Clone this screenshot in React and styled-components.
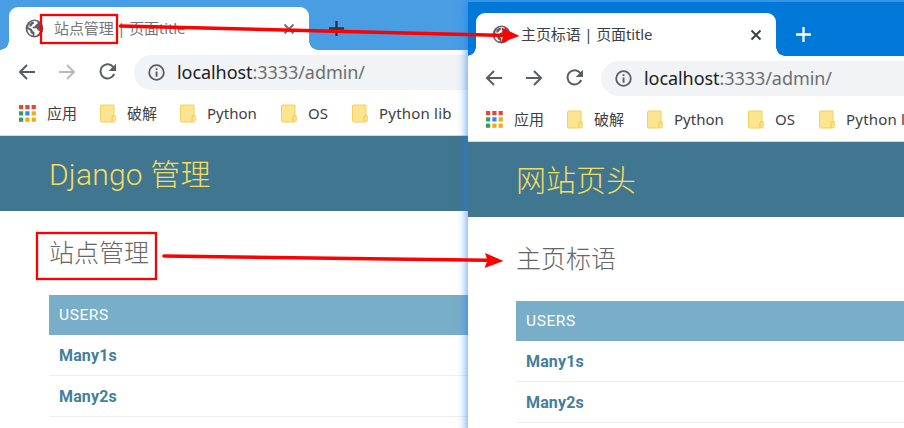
import React from "react";
import styled, { createGlobalStyle } from "styled-components";

const Global = createGlobalStyle`
  * { box-sizing: border-box; }
  body { margin: 0; overflow: hidden; background: #fff; }
`;

const uiFont = `"Noto Sans", "Noto Sans CJK SC", sans-serif`;

const Desktop = styled.div`
  position: relative;
  width: 904px;
  height: 428px;
  overflow: hidden;
  background: #499de3;
`;

const Window = styled.section`
  position: absolute;
  left: ${(p) => p.$x}px;
  top: ${(p) => p.$y}px;
  width: ${(p) => p.$w}px;
  height: 434px;
  padding-left: ${(p) => p.$lead}px;
  overflow: ${(p) => (p.$active ? "visible" : "hidden")};
  background: linear-gradient(
    ${(p) => (p.$active ? "#0078d7" : "#499de3")} 54px,
    #fff 54px 139px,
    #d3dade 139px 140px,
    #417690 140px 215px,
    #fff 215px
  );
  box-shadow: ${(p) => (p.$active ? "0 0 9px 1px rgba(30, 125, 245, 0.75)" : "none")};
`;

const TabStrip = styled.div`
  display: flex;
  align-items: flex-end;
  height: 54px;
  padding-left: 8px;
`;

const Tab = styled.div`
  position: relative;
  display: flex;
  align-items: center;
  width: 300px;
  height: 43px;
  padding: 0 14px 0 16px;
  border-radius: 9px 9px 0 0;
  background: #fff;
  color: ${(p) => (p.$active ? "#3c4043" : "#747679")};
  &::before, &::after {
    content: "";
    position: absolute;
    bottom: 0;
    width: 9px;
    height: 9px;
  }
  &::before {
    left: -9px;
    background: radial-gradient(circle at 0 0, transparent 8.5px, #fff 9px);
  }
  &::after {
    right: -9px;
    background: radial-gradient(circle at 100% 0, transparent 8.5px, #fff 9px);
  }
`;

const TabTitle = styled.span`
  flex: 1;
  margin: 0 0 1px 10px;
  font: 15px/20px ${uiFont};
  letter-spacing: -0.12px;
  white-space: nowrap;
`;

const NewTab = styled.div`
  display: flex;
  margin: 0 0 14px 20px;
  color: ${(p) => (p.$active ? "#fff" : "#27323c")};
`;

const Toolbar = styled.div`
  display: flex;
  align-items: center;
  height: 45px;
  padding-left: 16.5px;
  color: #5a5e63;
`;

const NavIcon = styled.span`
  display: flex;
  width: 40px;
  margin-bottom: 1px;
  opacity: ${(p) => (p.$dim ? 0.42 : 1)};
`;

const AddressBar = styled.div`
  display: flex;
  align-items: center;
  flex: 1;
  height: 35px;
  margin-left: -3.5px;
  padding-left: 14px;
  border-radius: 18px 0 0 18px;
  background: #f1f3f4;
`;

const Url = styled.span`
  margin: 0 0 2px 12px;
  font: 18px/24px ${uiFont};
  letter-spacing: -0.06px;
  color: #6b6e72;
  b { font-weight: 400; color: #202124; }
`;

const Bookmarks = styled.div`
  display: flex;
  align-items: center;
  height: 41px;
  padding: 0 0 5px 18px;
`;

const Bookmark = styled.span`
  display: flex;
  align-items: center;
  flex: none;
  margin-right: 23px;
  gap: 11px;
`;

const BookmarkLabel = styled.span`
  width: ${(p) => p.$w}px;
  font: 15px/20px ${uiFont};
  letter-spacing: ${(p) => p.$spacing || 0}px;
  color: #3c4043;
  white-space: nowrap;
`;

const SiteHeader = styled.header`
  display: flex;
  align-items: center;
  height: 75px;
  padding: 3px 0 0 48px;
  color: #f5dd5d;
  font: 300 30px/40px Roboto, "Noto Sans CJK SC", sans-serif;
  letter-spacing: ${(p) => p.$spacing || 0}px;
`;

const Content = styled.main`
  padding: 24px 0 0 48px;
`;

const PageTitle = styled.h1`
  height: 38px;
  margin: 0 0 22px;
  color: #666;
  font: 300 25px/38px Roboto, "Noto Sans CJK SC", sans-serif;
`;

const ModuleCaption = styled.div`
  height: 40px;
  padding-left: 10px;
  background: #79aec8;
  color: #fff;
  font: 400 15.5px/41px Roboto, sans-serif;
  letter-spacing: 0.6px;
`;

const ModelRow = styled.div`
  height: 41px;
  padding-left: 10px;
  border-bottom: 1px solid #eee;
  color: #447e9b;
  font: 700 16px/41px Roboto, sans-serif;
  letter-spacing: 0.15px;
`;

const Annotations = styled.svg`
  position: absolute;
  inset: 0;
`;

const Globe = () => (
  <svg width="19" height="19" viewBox="0 0 19 19">
    <circle cx="9.5" cy="9.5" r="8.9" fill="#5b5f64" />
    <path d="M9.600 1.800 12.500 2.800 12.500 4.700 10.600 5.700 10.100 7.200 7.700 7.900 7.900 9.200 11.600 9.200 13 11.400 14.800 12 13.800 14.600 11.300 16.600 9.300 17 9.600 13.700 7.600 11.800 6.700 10 3.200 8.300A7 7 0 0 1 9.600 1.800" fill="#fff" />
    <path d="M2.400 9.700 5.200 11.800 5.800 14.200 7.800 15.300 7.600 16.600A7.300 7.300 0 0 1 2.400 9.700" fill="#fff" />
    <path d="M4.300 5.200 6.400 3.300 9 2.800 8.900 4.600 7.200 5.700 6.500 7.300 4.500 7.800z" fill="#5b5f64" />
  </svg>
);

const Close = () => (
  <svg width="12" height="12" viewBox="0 0 12 12" fill="none" stroke="currentColor" strokeWidth="2">
    <path d="M1.500 1.500l9 9m0-9-9 9" />
  </svg>
);

const Plus = () => (
  <svg width="15" height="15" viewBox="0 0 15 15" fill="none" stroke="currentColor" strokeWidth="2.3">
    <path d="M7.500 0v15M0 7.500h15" />
  </svg>
);

const Arrow = ({ forward }) => (
  <svg width="18" height="18" viewBox="0 0 18 18" fill="none" stroke="currentColor" strokeWidth="2">
    <path d={forward ? "M1 9h15M9 2l7 7-7 7" : "M17 9H2M9 2L2 9l7 7"} />
  </svg>
);

const Reload = () => (
  <svg width="20" height="18" viewBox="0 0 20 18">
    <path d="M15.400 4.200A7.100 7.100 0 1 0 16.200 11" fill="none" stroke="currentColor" strokeWidth="2" />
    <path d="M18 .7V8h-7.300z" fill="currentColor" />
  </svg>
);

const Info = () => (
  <svg width="17" height="17" viewBox="0 0 17 17">
    <circle cx="8.500" cy="8.500" r="7.300" fill="none" stroke="#5a5e63" strokeWidth="1.8" />
    <path d="M7.600 4.200h1.900v1.900H7.600zM7.600 7.400h1.900v5.400H7.600z" fill="#5a5e63" />
  </svg>
);

const gridColors = ["#ea4335", "#ea4335", "#ea4335", "#34a05a", "#2e8bef", "#f9a80b", "#34a05a", "#f9a80b", "#f9a80b"];

const Apps = () => (
  <svg width="17" height="17" viewBox="0 0 17 17">
    {gridColors.map((c, i) => (
      <rect key={i} x={(i % 3) * 6.3} y={Math.floor(i / 3) * 6.3} width="4.2" height="4.2" fill={c} />
    ))}
  </svg>
);

const Folder = () => (
  <svg width="16" height="19" viewBox="0 0 16 19">
    <path d="M1 1h13v10.800h1.300V17l-1 1H1.500L.5 17.200V1.500z" fill="#ffe48f" stroke="#f5d05c" />
    <path d="M14 11.800h-1.400l-.6 1.600v4.400" fill="none" stroke="#edc74f" />
  </svg>
);

const bookmarks = [
  { name: "破解", width: 30 },
  { name: "Python", width: 51 },
  { name: "OS", width: 21 },
  { name: "Python lib", width: 74, spacing: 0.2 },
];

const Browser = ({ x, y, w, lead, active, tab, header, headerSpacing, title }) => (
  <Window $x={x} $y={y} $w={w} $lead={lead} $active={active}>
    <TabStrip>
      <Tab $active={active}>
        <Globe />
        <TabTitle>{tab}</TabTitle>
        <Close />
      </Tab>
      <NewTab $active={active}><Plus /></NewTab>
    </TabStrip>
    <Toolbar>
      <NavIcon><Arrow /></NavIcon>
      <NavIcon $dim={!active}><Arrow forward /></NavIcon>
      <NavIcon><Reload /></NavIcon>
      <AddressBar>
        <Info />
        <Url><b>localhost</b>:3333/admin/</Url>
      </AddressBar>
    </Toolbar>
    <Bookmarks>
      <Bookmark>
        <Apps />
        <BookmarkLabel $w={30}>应用</BookmarkLabel>
      </Bookmark>
      {bookmarks.map(({ name, width, spacing }) => (
        <Bookmark key={name}>
          <Folder />
          <BookmarkLabel $w={width} $spacing={spacing}>{name}</BookmarkLabel>
        </Bookmark>
      ))}
    </Bookmarks>
    <SiteHeader $spacing={headerSpacing}>{header}</SiteHeader>
    <Content>
      <PageTitle>{title}</PageTitle>
      <ModuleCaption>USERS</ModuleCaption>
      <ModelRow>Many1s</ModelRow>
      <ModelRow>Many2s</ModelRow>
    </Content>
  </Window>
);

export default function App() {
  return (
    <Desktop>
      <Global />
      <Browser x={0} y={-4} w={904} lead={1} tab="站点管理 | 页面title" header="Django 管理" headerSpacing={0.2} title="站点管理" />
      <Browser x={468} y={2} w={446} lead={0} active tab="主页标语 | 页面title" header="网站页头" title="主页标语" />
      <Annotations width="904" height="428" viewBox="0 0 904 428" fill="none" stroke="#fe0000">
        <rect x="41" y="15" width="76" height="28" strokeWidth="2.3" />
        <rect x="37" y="233" width="119" height="46" strokeWidth="2.3" />
        <path d="M120.500 26 506 35.500" strokeWidth="3.5" strokeLinecap="round" />
        <path d="M164 256 488 260.300" strokeWidth="3.5" strokeLinecap="round" />
        <path d="M519.500 36 501 43 503.500 35.500 501.500 27.500z" fill="#fe0000" stroke="none" />
        <path d="M503.500 261 484.500 268 487.500 260.500 485 253z" fill="#fe0000" stroke="none" />
      </Annotations>
    </Desktop>
  );
}
